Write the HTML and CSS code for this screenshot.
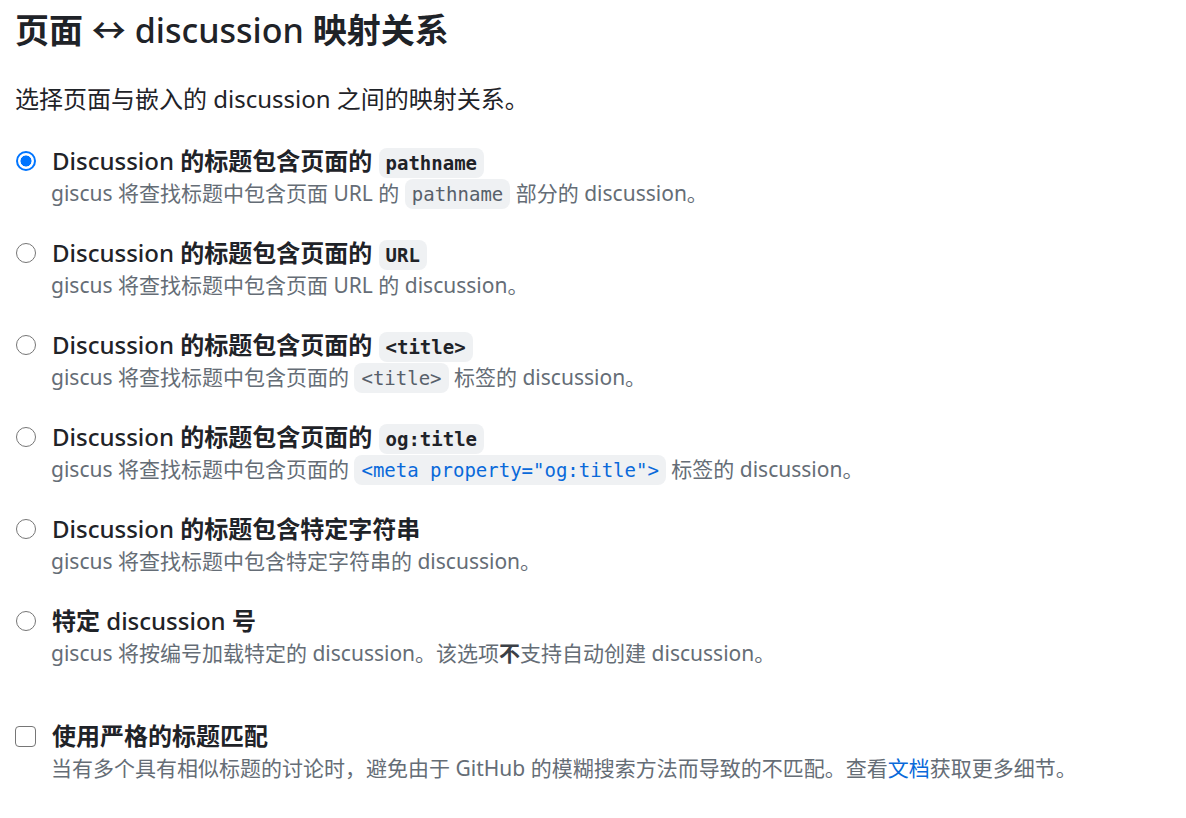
FILE: index.html
```html
<!DOCTYPE html>
<html lang="zh-CN">
<head>
<meta charset="utf-8">
<title>页面 ↔ discussion 映射关系</title>
<link rel="stylesheet" href="styles.css">
</head>
<body>
<main class="page">
  <h2 class="heading">页面 <span class="lt">↔ discussion</span> 映射关系</h2>
  <p class="intro">选择页面与嵌入的 discussion 之间的映射关系。</p>

  <div class="options">
    <label class="option">
      <input class="radio" type="radio" name="mapping" checked>
      <span class="body">
        <span class="title"><span class="lt">Discussion</span> 的标题包含页面的 <code>pathname</code></span>
        <span class="note">giscus 将查找标题中包含页面 URL 的 <code>pathname</code> 部分的 discussion。</span>
      </span>
    </label>

    <label class="option">
      <input class="radio" type="radio" name="mapping">
      <span class="body">
        <span class="title"><span class="lt">Discussion</span> 的标题包含页面的 <code>URL</code></span>
        <span class="note">giscus 将查找标题中包含页面 URL 的 discussion。</span>
      </span>
    </label>

    <label class="option">
      <input class="radio" type="radio" name="mapping">
      <span class="body">
        <span class="title"><span class="lt">Discussion</span> 的标题包含页面的 <code>&lt;title&gt;</code></span>
        <span class="note">giscus 将查找标题中包含页面的 <code>&lt;title&gt;</code> 标签的 discussion。</span>
      </span>
    </label>

    <label class="option">
      <input class="radio" type="radio" name="mapping">
      <span class="body">
        <span class="title"><span class="lt">Discussion</span> 的标题包含页面的 <code>og:title</code></span>
        <span class="note">giscus 将查找标题中包含页面的 <code class="code-blue">&lt;meta property="og:title"&gt;</code> 标签的 discussion。</span>
      </span>
    </label>

    <label class="option">
      <input class="radio" type="radio" name="mapping">
      <span class="body">
        <span class="title"><span class="lt">Discussion</span> 的标题包含特定字符串</span>
        <span class="note">giscus 将查找标题中包含特定字符串的 discussion。</span>
      </span>
    </label>

    <label class="option">
      <input class="radio" type="radio" name="mapping">
      <span class="body">
        <span class="title">特定 <span class="lt">discussion</span> 号</span>
        <span class="note">giscus 将按编号加载特定的 discussion。该选项<strong>不</strong>支持自动创建 discussion。</span>
      </span>
    </label>
  </div>

  <label class="option option-check">
    <input class="checkbox" type="checkbox">
    <span class="body">
      <span class="title">使用严格的标题匹配</span>
      <span class="note">当有多个具有相似标题的讨论时，避免由于 GitHub 的模糊搜索方法而导致的不匹配。查看<a class="link" href="#">文档</a>获取更多细节。</span>
    </span>
  </label>
</main>
</body>
</html>
```

FILE: styles.css
```css
html, body {
  margin: 0;
  padding: 0;
  background: #ffffff;
}

body {
  font-family: "Noto Sans", "Noto Sans CJK SC", sans-serif;
  color: #1f2328;
}

.page {
  padding: 7px 15px 0 15px;
}

.heading {
  margin: 0;
  height: 46px;
  font-size: 34px;
  line-height: 46px;
  font-weight: 700;
  white-space: nowrap;
}

.lt {
  font-weight: 500;
}

.intro {
  margin: 28px 0 28px 0;
  height: 36px;
  font-size: 24px;
  line-height: 36px;
}

.options {
  display: flex;
  flex-direction: column;
  gap: 28px;
}

.option {
  display: flex;
  align-items: flex-start;
  gap: 16px;
}

.option-check {
  margin-top: 51px;
}

.radio {
  appearance: none;
  -webkit-appearance: none;
  flex: none;
  box-sizing: border-box;
  width: 20px;
  height: 20px;
  margin: 6px 0 0 1px;
  border: 1.5px solid #767676;
  border-radius: 50%;
  background: #ffffff;
}

.radio:checked {
  border: 2px solid #0075ff;
  background: radial-gradient(circle, #0075ff 0 5.2px, #ffffff 5.8px);
}

.checkbox {
  appearance: none;
  -webkit-appearance: none;
  flex: none;
  box-sizing: border-box;
  width: 21px;
  height: 21px;
  margin: 6px 0 0 0;
  border: 1.5px solid #767676;
  border-radius: 4px;
  background: #ffffff;
}

.body {
  display: flex;
  flex-direction: column;
}

.title {
  display: block;
  height: 32px;
  font-size: 24px;
  line-height: 32px;
  font-weight: 700;
  color: #1f2328;
  white-space: nowrap;
}

.note {
  display: block;
  height: 32px;
  font-size: 21px;
  line-height: 32px;
  color: #656d76;
  margin-left: -1px;
  white-space: nowrap;
}

.note strong {
  font-weight: 700;
  color: #3b4046;
}

code {
  font-family: "DejaVu Sans Mono", monospace;
  font-size: 19px;
  padding: 4px 7px;
  border-radius: 8px;
  background: #eff1f3;
}

.title code {
  color: #1f2328;
  font-weight: 700;
}

.note code {
  color: #57606a;
  font-weight: 400;
}

.note .code-blue {
  color: #0969da;
}

.link {
  color: #0969da;
  text-decoration: none;
}
```
